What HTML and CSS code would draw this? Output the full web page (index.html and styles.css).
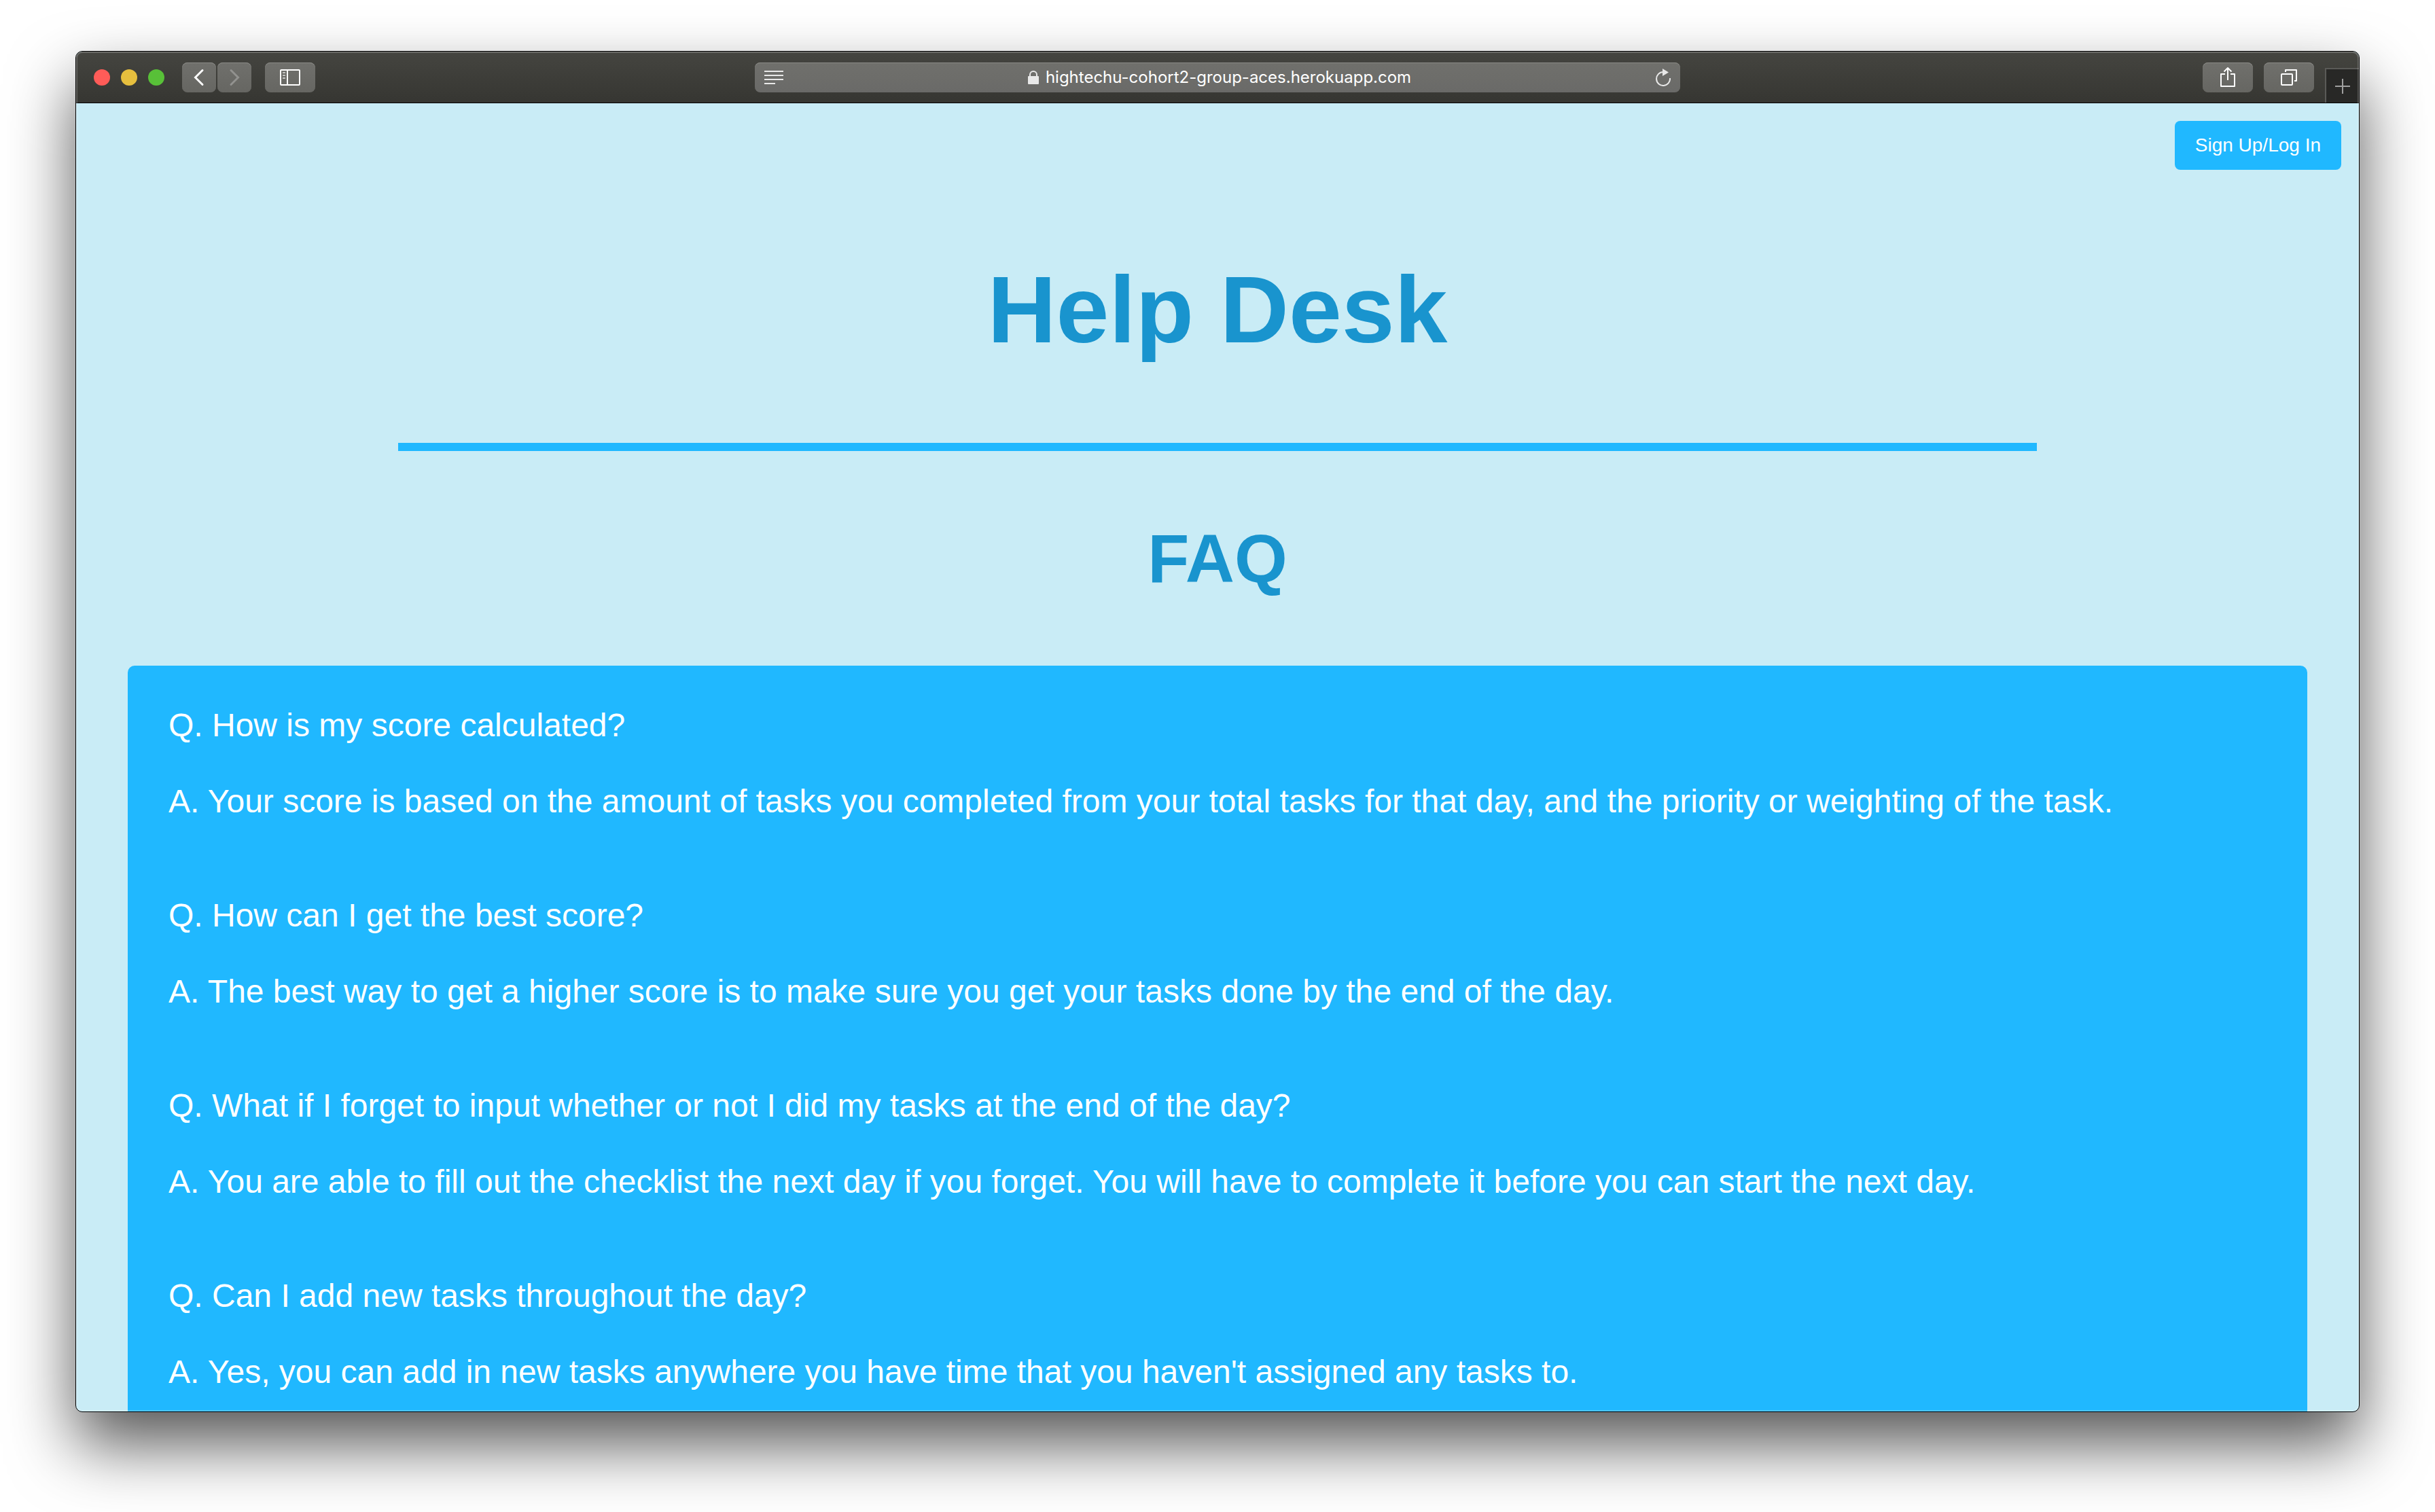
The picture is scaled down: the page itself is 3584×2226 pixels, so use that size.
FILE: index.html
```html
<!DOCTYPE html>
<html lang="en">
<head>
<meta charset="utf-8">
<meta name="viewport" content="width=device-width, initial-scale=1">
<title>Help Desk</title>
<link rel="stylesheet" href="styles.css">
</head>
<body>
<div class="window">
  <div class="toolbar">
    <div class="tools tools-left">
      <div class="lights">
        <button class="light light-close" aria-label="Close"></button>
        <button class="light light-minimize" aria-label="Minimize"></button>
        <button class="light light-zoom" aria-label="Zoom"></button>
      </div>
      <div class="history">
        <button class="tool tool-narrow" aria-label="Back">
          <svg width="50" height="44" viewBox="0 0 50 44"><path d="M30 11.5 19.500 22l10.500 10.500" fill="none" stroke="#fff" stroke-width="3" stroke-linecap="round"/></svg>
        </button>
        <button class="tool tool-narrow" aria-label="Forward">
          <svg width="50" height="44" viewBox="0 0 50 44"><path d="M20 11.500 30.500 22 20 32.500" fill="none" stroke="#92928f" stroke-width="3" stroke-linecap="round"/></svg>
        </button>
      </div>
      <button class="tool" aria-label="Show sidebar">
        <svg width="74" height="44" viewBox="0 0 74 44"><rect x="23" y="11" width="28" height="22" rx="1" fill="none" stroke="#fff" stroke-width="2"/><path d="M33 11v22" stroke="#fff" stroke-width="2"/><path d="M26 15h4M26 19h4M26 23h4" stroke="#c4c4c2" stroke-width="2"/></svg>
      </button>
    </div>
    <div class="address">
      <button class="address-button" aria-label="Show reader view">
        <svg width="28" height="20" viewBox="0 0 28 20"><path d="M0 1h28M0 7h28M0 13h28M0 19h16" stroke="#e8e8e8" stroke-width="2"/></svg>
      </button>
      <div class="site">
        <svg width="16" height="20" viewBox="0 0 16 20"><path d="M3 9V6a5 5 0 0 1 10 0v3" fill="none" stroke="#e8e8e8" stroke-width="2"/><rect y="8" width="16" height="12" rx="1" fill="#e8e8e8"/></svg>
        <span>hightechu-cohort2-group-aces.herokuapp.com</span>
      </div>
      <button class="address-button" aria-label="Reload">
        <svg width="22" height="26" viewBox="0 0 22 26"><path d="M21 14A10 10 0 1 1 11 5" fill="none" stroke="#e8e8e8" stroke-width="2"/><path d="M10 0v11l9-5.500z" fill="#e8e8e8"/></svg>
      </button>
    </div>
    <div class="tools tools-right">
      <button class="tool" aria-label="Share">
        <svg width="74" height="44" viewBox="0 0 74 44"><path d="M33 17h-6v18h20V17h-6M37 26V8M31.500 13.500 37 8l5.500 5.500" fill="none" stroke="#fff" stroke-width="2" stroke-linejoin="round"/></svg>
      </button>
      <button class="tool" aria-label="Show all tabs">
        <svg width="74" height="44" viewBox="0 0 74 44"><path d="M32 14v-3h16v16h-3" fill="none" stroke="#fff" stroke-width="2" stroke-linejoin="round"/><rect x="26" y="17" width="16" height="16" rx="1" fill="none" stroke="#fff" stroke-width="2"/></svg>
      </button>
      <button class="new-tab" aria-label="New tab">
        <svg width="22" height="22" viewBox="0 0 22 22"><path d="M11 0v22M0 11h22" stroke="#a0a09f" stroke-width="2"/></svg>
      </button>
    </div>
  </div>
  <main class="page">
    <nav class="account"><button class="sign-in">Sign Up/Log In</button></nav>
    <h1 class="title">Help Desk</h1>
    <hr class="rule">
    <h2 class="subtitle">FAQ</h2>
    <section class="faq">
      <div class="entry">
        <p>Q. How is my score calculated?</p>
        <p>A. Your score is based on the amount of tasks you completed from your total tasks for that day, and the priority or weighting of the task.</p>
      </div>
      <div class="entry">
        <p>Q. How can I get the best score?</p>
        <p>A. The best way to get a higher score is to make sure you get your tasks done by the end of the day.</p>
      </div>
      <div class="entry">
        <p>Q. What if I forget to input whether or not I did my tasks at the end of the day?</p>
        <p>A. You are able to fill out the checklist the next day if you forget. You will have to complete it before you can start the next day.</p>
      </div>
      <div class="entry">
        <p>Q. Can I add new tasks throughout the day?</p>
        <p>A. Yes, you can add in new tasks anywhere you have time that you haven't assigned any tasks to.</p>
      </div>
    </section>
  </main>
</div>
</body>
</html>
```

FILE: styles.css
```css
* {
  box-sizing: border-box;
}

body {
  display: flex;
  height: 100vh;
  margin: 0;
  padding: 75px 111px 147px;
  background: #fff;
  font-family: "Liberation Sans", Arial, sans-serif;
}

button {
  margin: 0;
  padding: 0;
  border: 0;
  background: none;
  font: inherit;
  color: inherit;
}

svg {
  display: block;
}

/* Browser window */
.window {
  position: relative;
  display: flex;
  flex: 1;
  flex-direction: column;
  min-width: 0;
  overflow: hidden;
  border: 1px solid #000;
  border-radius: 10px;
  background: #c9ecf6;
  box-shadow: 0 48px 96px rgba(0, 0, 0, 0.66);
}

/* Light edge along the inside of the frame */
.window::after {
  content: "";
  position: absolute;
  inset: 0;
  border-radius: 9px;
  box-shadow: inset 0 0 0 2px rgba(255, 255, 255, 0.2);
  pointer-events: none;
}

.toolbar {
  display: grid;
  flex: none;
  grid-template-columns: 999fr 1362fr 999fr;
  align-items: start;
  height: 76px;
  border-bottom: 1px solid #000;
  background: linear-gradient(#454540, #363632);
}

.tools {
  display: flex;
  padding-top: 16px;
}

.tools-left {
  gap: 20px;
  padding-left: 26px;
}

.lights {
  display: flex;
  align-items: center;
  gap: 16px;
  margin-right: 6px;
}

.light {
  width: 24px;
  height: 24px;
  border-radius: 50%;
}

.light-close {
  background: #ff5c58;
}

.light-minimize {
  background: #e6bf3e;
}

.light-zoom {
  background: #58c038;
}

.history {
  display: flex;
  gap: 2px;
}

.tool,
.address {
  height: 44px;
  border-radius: 8px;
  background: linear-gradient(#70706c, #666662);
  box-shadow: inset 0 1px 0 #8a8a86;
}

.tool {
  width: 74px;
}

.tool-narrow {
  width: 50px;
}

.address {
  display: flex;
  align-items: center;
  justify-content: space-between;
  margin-top: 16px;
  padding: 0 14px;
  background: linear-gradient(#70706c, #6a6a68);
}

.site {
  display: flex;
  align-items: center;
  gap: 10px;
  color: #fff;
  font-family: Inter, sans-serif;
  font-size: 24px;
  line-height: 32px;
}

.tools-right {
  justify-content: flex-end;
  gap: 16px;
}

.new-tab {
  display: flex;
  align-items: center;
  justify-content: center;
  width: 50px;
  height: 51px;
  margin-top: 8px;
  border-top: 2px solid #5a5a57;
  border-left: 2px solid #5a5a57;
  background: #282826;
}

/* Help page */
.page {
  flex: 1;
  min-height: 0;
  overflow: hidden;
  color: #1994ce;
  text-align: center;
}

.account {
  display: flex;
  justify-content: flex-end;
  padding: 26px 26px 0;
}

.sign-in {
  height: 72px;
  padding: 0 30px;
  border-radius: 8px;
  background: #20b8ff;
  color: #fff;
  font-size: 28px;
  line-height: 32px;
}

.title {
  margin: 126px 0 116px;
  font-size: 140px;
  line-height: 160px;
}

.rule {
  width: 2412px;
  max-width: 72%;
  height: 12px;
  margin: 0 auto;
  border: 0;
  background: #20b8ff;
}

.subtitle {
  margin: 102px 0;
  font-size: 100px;
  line-height: 112px;
}

.faq {
  margin: 0 76px;
  padding: 60px;
  border-radius: 10px;
  background: #20b8ff;
  color: #fff;
  font-size: 48px;
  line-height: 56px;
  text-align: left;
}

.entry {
  margin-bottom: 112px;
}

.entry p {
  margin: 0 0 56px;
}
```
